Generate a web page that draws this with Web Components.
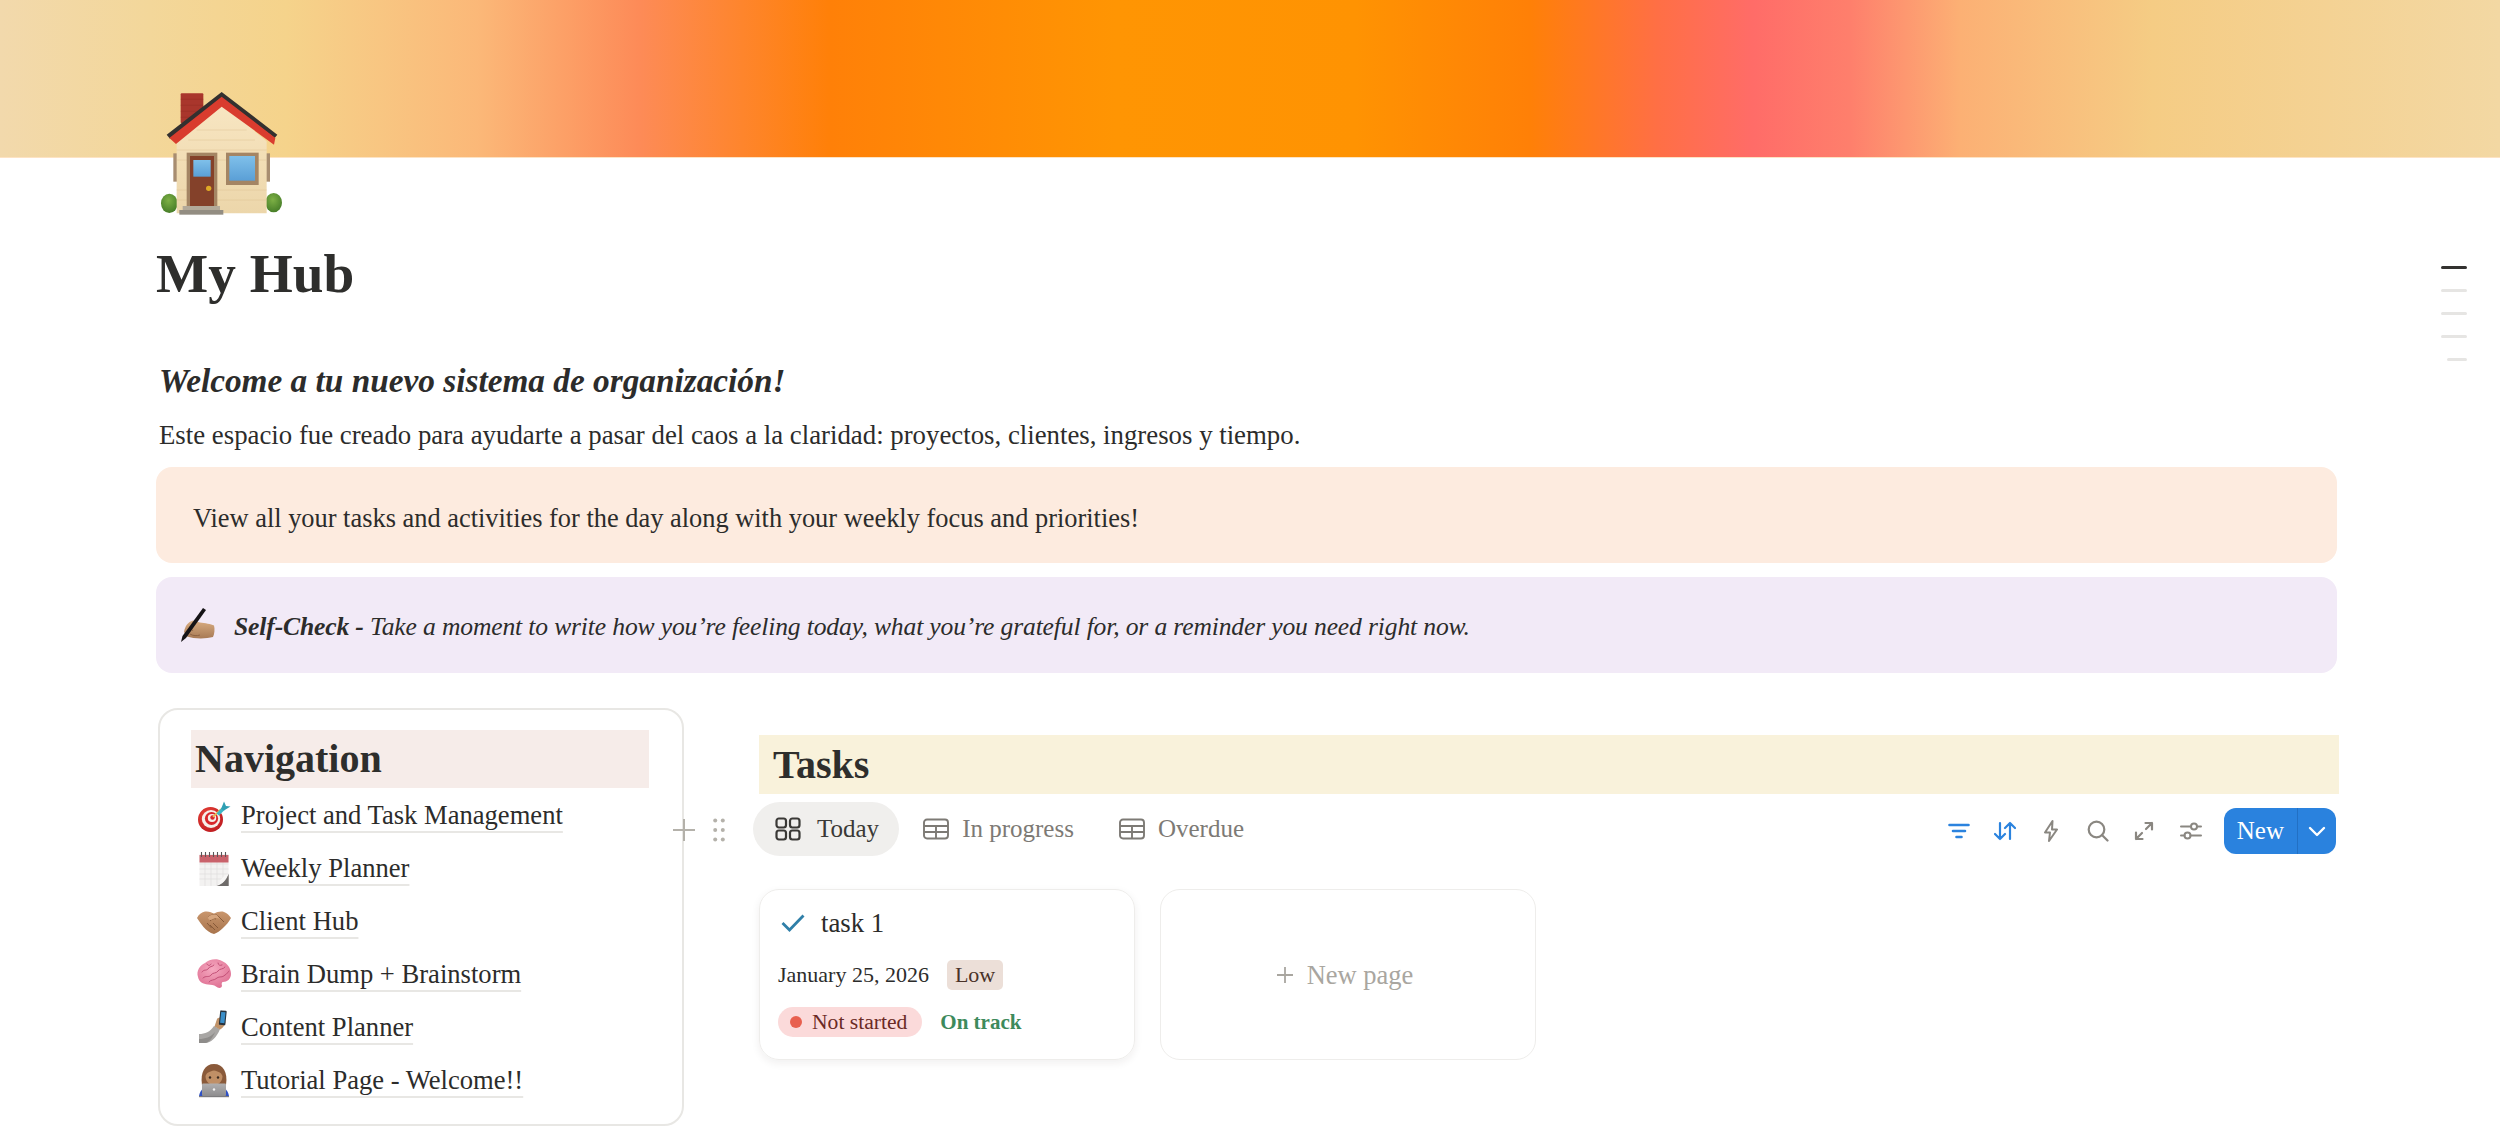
<!DOCTYPE html>
<html lang="en">
<head>
<meta charset="utf-8">
<title>My Hub</title>
<style>
  html, body { margin: 0; background: #fff; }
  body { font-family: "Liberation Serif", serif; color: #2c2c2b; }
</style>
</head>
<body>
<hub-page>
  <hub-cover></hub-cover>
  <hub-title>My Hub</hub-title>
  <hub-intro></hub-intro>
  <hub-callout tone="peach">View all your tasks and activities for the day along with your weekly focus and priorities!</hub-callout>
  <hub-callout tone="lilac" icon="writing"><b>Self-Check -</b> Take a moment to write how you’re feeling today, what you’re grateful for, or a reminder you need right now.</hub-callout>
  <hub-columns>
    <nav-card slot="left">
      <nav-link icon="target">Project and Task Management</nav-link>
      <nav-link icon="calendar">Weekly Planner</nav-link>
      <nav-link icon="handshake">Client Hub</nav-link>
      <nav-link icon="brain">Brain Dump + Brainstorm</nav-link>
      <nav-link icon="selfie">Content Planner</nav-link>
      <nav-link icon="laptop">Tutorial Page - Welcome!!</nav-link>
    </nav-card>
    <tasks-view slot="right">
      <task-card slot="cards"></task-card>
      <new-card slot="cards"></new-card>
    </tasks-view>
  </hub-columns>
  <outline-rail></outline-rail>
</hub-page>

<script>
// emoji pictures, all drawn in a 36x36 box
const EMOJI = {
  target: `
    <defs><radialGradient id="t1" cx=".4" cy=".35" r=".8"><stop offset="0" stop-color="#f04a3c"/><stop offset="1" stop-color="#b5131b"/></radialGradient></defs>
    <circle cx="14.5" cy="21.5" r="12.5" fill="url(#t1)"/>
    <ellipse cx="15" cy="21" rx="9.2" ry="9" fill="#f6efe9"/>
    <ellipse cx="15.5" cy="20.5" rx="6.6" ry="6.4" fill="#d8262a"/>
    <ellipse cx="16" cy="20" rx="4.2" ry="4" fill="#f6efe9"/>
    <circle cx="16.5" cy="19.5" r="2.2" fill="#d8262a"/>
    <path d="M17 19 L25 11" stroke="#e8c24a" stroke-width="1.6"/>
    <path d="M20.5 15.5 L26 9.5 L28.5 12 L23 17.5 Z" fill="#3eb6c6"/>
    <path d="M25 11 L28 3.5 L30 8 L34.5 8.5 L28 12.5 Z" fill="#2f9fb3"/>`,
  calendar: `
    <rect x="3.5" y="3" width="29" height="32" fill="#f3f2f1"/>
    <path d="M3.5 13 H32.5 M3.5 18 H32.5 M3.5 23 H32.5 M3.5 28 H32.5 M9 10 V35 M15 10 V35 M21 10 V35 M27 10 V35" stroke="#dfdedd" stroke-width=".7"/>
    <rect x="3.5" y="4" width="29" height="7.5" fill="#c9626b"/>
    <path d="M5.5 1 V6 M9.5 1 V6 M13.5 1 V6 M17.5 1 V6 M21.5 1 V6 M25.5 1 V6 M29.5 1 V6" stroke="#5a5557" stroke-width="1.1"/>
    <path d="M32.5 23 C29 28 25 29 21 35 H32.5 Z" fill="#8b8886"/>
    <path d="M32.5 23 C27 25 24 29 21 35 C26 33 30 30 32.5 23 Z" fill="#f7f6f5"/>
    <path d="M32.5 23 C31 29 27 33 21 35 L32.5 35 Z" fill="#6e6b69"/>`,
  handshake: `
    <defs><linearGradient id="h1" x1="0" y1="0" x2="0" y2="1"><stop offset="0" stop-color="#c9966d"/><stop offset="1" stop-color="#a8744c"/></linearGradient></defs>
    <path d="M1 14 C3 10 6 8 9 7.5 C13 7 16 8.5 18 9.5 C21 8 25 7 28 8 C31 9 33 11 35 14 C33 18 30 21 27 24 C24 27 21 29 18 30 C14 29 10 26 7.5 23 C5 20 3 17 1 14 Z" fill="url(#h1)"/>
    <path d="M12 13 C15 11 18 10 21 11 L28 18 M14 17 C16 15 18 14 20 15 M17 19 L22 24 M14 21 L19 26 M11 19 L15.5 24" stroke="#875a39" stroke-width="1" fill="none"/>
    <path d="M12 13 C12 16 14 17 17 15 C20 13.5 22 14 24 15 L21 11 C17 10 14 11 12 13 Z" fill="#d6a67e"/>`,
  brain: `
    <defs><radialGradient id="b1" cx=".45" cy=".35" r=".75"><stop offset="0" stop-color="#f6a9c0"/><stop offset="1" stop-color="#dc6a8e"/></radialGradient></defs>
    <path d="M2 20 C0 14 4 8 9 6 C13 2 21 1 26 4 C31 6 35 11 35 17 C35 22 31 25 27 25 C25.5 25 25.5 27 26 29 C25.5 31.5 22 31.5 20 29.5 C18 27.5 15 28 12 27.5 C7 27 3 25 2 20 Z" fill="url(#b1)"/>
    <path d="M6 15 C8 12 10 14 12 12 C13 9 17 10 18 8 M7 21 C10 18 13 21 15 18 C17 15 20 17 22 14 C24 11 27 13 29 10 M13 25 C15 22 18 24 21 21 C24 19 26 21 29 18 C31 17 32 15 33 14 M11 7 C12 9 14 9 15 7 M22 6 C22 8 24 9 26 8" stroke="#c24f76" stroke-width="1" fill="none" stroke-linecap="round"/>`,
  selfie: `
    <path d="M3 24 C9 24 14 22 18 16 L24 19 C21 27 15 33 9 33 H3 Z" fill="#a8a6a4"/>
    <path d="M3 29 C9 29 15 27 19 22 C17 27 13 33 9 33 H3 Z" fill="#8e8c8a"/>
    <path d="M18.5 16.5 L21 9 C22 7 27 7 28 9 L29.5 12 C29 15 26.5 18.5 24 19.5 Z" fill="#c09268"/>
    <rect x="23.5" y="0.5" width="6.5" height="14.5" rx="1" fill="#27333e" transform="rotate(6 26 8)"/>
    <rect x="24.6" y="2" width="4.3" height="11" fill="#3a8fc9" transform="rotate(6 26 8)"/>`,
  laptop: `
    <defs><linearGradient id="l1" x1="0" y1="0" x2="0" y2="1"><stop offset="0" stop-color="#b0afb0"/><stop offset="1" stop-color="#8e8d8f"/></linearGradient></defs>
    <path d="M6 22 C4 9 9 1 18 1 C27 1 32 9 30 22 Z" fill="#8a5a3a"/>
    <path d="M9.5 13 C11 9 14 8.5 18 7.5 C22 8.5 25 9 26.5 13 C26.5 19 22 22 18 22 C14 22 9.5 19 9.5 13 Z" fill="#c08f66"/>
    <circle cx="14" cy="14.5" r="1.2" fill="#3b2a20"/><circle cx="22" cy="14.5" r="1.2" fill="#3b2a20"/>
    <path d="M3 33 C3.5 30 5 27 8 24.5 H28 C31 27 32.5 30 33 33 Z" fill="#2f51c4"/>
    <rect x="6" y="20.5" width="24" height="12.5" rx="1" fill="url(#l1)"/>
    <rect x="3" y="33" width="30" height="1.2" fill="#7c7b7d"/>
    <circle cx="18" cy="26.5" r="1.2" fill="#f3f3f3"/>`,
  writing: `
    <defs><linearGradient id="w1" x1="0" y1="0" x2="0" y2="1"><stop offset="0" stop-color="#d9ad82"/><stop offset="1" stop-color="#a87a55"/></linearGradient></defs>
    <path d="M4 25 C5 19 8 15 13 13.5 L20 15.5 C25 16 31 17 34 18.5 C35 22 34.5 27 33 30 C26 32 14 32 7 29.5 Z" fill="url(#w1)"/>
    <path d="M10 27 C13 29 17 29 20 28 M8 24 C10 22 12 22 13 24" stroke="#8a5f40" stroke-width=".9" fill="none"/>
    <path d="M23 1 L26 3 L6 31 L1 35 L2.5 29 Z" fill="#151316"/>`
};

// shorthand for a plain custom element: markup and styles in an open shadow root
function defineEl(name, html, onConnect) {
  customElements.define(name, class extends HTMLElement {
    constructor() {
      super();
      this.attachShadow({ mode: 'open' }).innerHTML = html;
    }
    connectedCallback() {
      if (onConnect) onConnect(this);
    }
  });
}

function emojiSvg(name, size) {
  return `<svg xmlns="http://www.w3.org/2000/svg" width="${size}" height="${size}" viewBox="0 0 36 36" aria-hidden="true">${EMOJI[name]}</svg>`;
}

defineEl('hub-page', `
  <style>
    :host { display: block; position: relative; height: 1127px; overflow: hidden; }
    .body { padding: 0 163px 0 156px; }
  </style>
  <slot name="top"></slot>
  <div class="body"><slot></slot></div>
`);

defineEl('hub-cover', `
  <style>
    :host { display: block; }
    .band {
      height: 157px;
      border-bottom: 1px solid #fde3c4;
      background: linear-gradient(90deg,
        #f2d9ac 0, #f3d79a 150px, #f5d38b 287px, #fbb878 478px, #fd8b58 638px, #ff8008 829px,
        #ff9503 1116px, #ff9302 1355px, #ff8007 1530px, #ff6f45 1658px, #ff6c68 1753px,
        #fe7f6c 1850px, #fcb074 1960px, #f5cc84 2152px, #f3d8a3 2500px);
    }
    svg { display: block; margin: -88px 0 0 140px; }
  </style>
  <div class="band"></div>
  <svg xmlns="http://www.w3.org/2000/svg" width="160" height="160" viewBox="0 0 480 480" aria-hidden="true">
    <defs>
      <linearGradient id="wall" x1="0" y1="0" x2="0" y2="1"><stop offset="0" stop-color="#f8e6c2"/><stop offset="1" stop-color="#ecd6aa"/></linearGradient>
      <radialGradient id="bush" cx=".45" cy=".35" r=".7"><stop offset="0" stop-color="#7db045"/><stop offset="1" stop-color="#437a26"/></radialGradient>
      <linearGradient id="glass" x1="0" y1="0" x2="0" y2="1"><stop offset="0" stop-color="#7fc0ea"/><stop offset="1" stop-color="#5a9fd6"/></linearGradient>
    </defs>
    <rect x="122" y="70" width="68" height="90" rx="3" fill="#a9362c"/>
    <path d="M122 88 H190 M122 106 H190 M122 124 H190 M122 142 H190" stroke="#8e2a22" stroke-width="2" opacity=".5"/>
    <rect x="100" y="250" width="12" height="85" fill="#a88d70"/>
    <rect x="378" y="250" width="12" height="85" fill="#a88d70"/>
    <ellipse cx="88" cy="400" rx="25" ry="29" fill="url(#bush)"/>
    <ellipse cx="401" cy="398" rx="25" ry="29" fill="url(#bush)"/>
    <path d="M110 214 L245 100 L380 214 V430 H110 Z" fill="url(#wall)"/>
    <path d="M110 240 H380 M110 270 H380 M110 360 H380 M110 390 H380 M170 180 H320 M145 210 H345" stroke="#dcc08f" stroke-width="2" opacity=".6"/>
    <path d="M80 194 L245 66 L412 194 L404 204 L245 84 L90 206 Z" fill="#33302f"/>
    <path d="M88 204 L245 80 L406 204 L402 224 L245 110 L108 222 Z" fill="#d93c2e"/>
    <rect x="140" y="248" width="92" height="165" fill="#a48564"/>
    <rect x="150" y="258" width="72" height="150" fill="#84412a"/>
    <rect x="160" y="270" width="52" height="50" fill="url(#glass)"/>
    <circle cx="206" cy="355" r="8" fill="#e0aa26"/>
    <rect x="258" y="248" width="98" height="97" fill="#a48564"/>
    <rect x="268" y="258" width="77" height="74" fill="url(#glass)"/>
    <rect x="128" y="408" width="112" height="14" fill="#b3aa9a"/>
    <rect x="118" y="420" width="132" height="14" fill="#938d82"/>
  </svg>
`, el => { el.slot = 'top'; });

defineEl('hub-title', `
  <style>
    :host { display: block; margin: 9px 0 0 0; font: 700 55.3px/70px "Liberation Serif", serif; color: #2e2e2c; }
  </style>
  <slot></slot>
`);

defineEl('hub-intro', `
  <style>
    :host { display: block; margin: 50px 0 0 3px; font-family: "Liberation Serif", serif; }
    .lead { font: italic 700 33.3px/44px "Liberation Serif", serif; color: #2c2c2b; }
    .sub { font-size: 26.8px; line-height: 40px; margin-top: 12px; color: #2c2c2b; }
  </style>
  <div class="lead">Welcome a tu nuevo sistema de organización!</div>
  <div class="sub">Este espacio fue creado para ayudarte a pasar del caos a la claridad: proyectos, clientes, ingresos y tiempo.</div>
`);

customElements.define('hub-callout', class extends HTMLElement {
  constructor() {
    super();
    this.attachShadow({ mode: 'open' });
  }
  connectedCallback() {
    const lilac = this.getAttribute('tone') === 'lilac';
    const icon = this.getAttribute('icon');
    this.shadowRoot.innerHTML = `
      <style>
        :host { display: block; }
        .box {
          display: flex; align-items: center; box-sizing: border-box; height: 96px;
          margin-top: ${lilac ? 14 : 12}px; border-radius: 16px;
          padding: ${lilac ? 3 : 5}px 0 0 ${lilac ? 24 : 37}px; gap: 18px;
          background: ${lilac ? '#f2eaf7' : '#fdebdf'};
          font: ${lilac ? 'italic 25.6px/40px' : 'normal 26.4px/40px'} "Liberation Serif", serif;
          letter-spacing: ${lilac ? '-.15px' : '0'}; color: #2c2c2b;
        }
        svg { flex: none; display: block; margin-top: -4px; }
      </style>
      <div class="box">${icon ? emojiSvg(icon, 36) : ''}<div><slot></slot></div></div>`;
  }
});

defineEl('hub-columns', `
  <style>
    :host { display: grid; grid-template-columns: 526px 1580px; column-gap: 75px; margin: 35px 0 0 2px; align-items: start; }
    .side { position: relative; }
  </style>
  <div class="side"><slot name="left"></slot></div>
  <div class="side"><slot name="right"></slot></div>
`);

defineEl('nav-card', `
  <style>
    :host { display: block; position: relative; box-sizing: border-box; height: 418px; border: 2px solid #e8e7e4; border-radius: 20px; padding: 20px 33px 0 31px; }
    h2 { margin: 0; height: 58px; background: #f6ece9; padding-left: 4px; font: 700 40px/58px "Liberation Serif", serif; color: #2e2e2c; }
  </style>
  <h2>Navigation</h2>
  <slot></slot>
`);

customElements.define('nav-link', class extends HTMLElement {
  constructor() {
    super();
    this.attachShadow({ mode: 'open' });
  }
  connectedCallback() {
    this.shadowRoot.innerHTML = `
      <style>
        :host { display: flex; align-items: center; height: 53px; padding-left: 5px; gap: 9px; font: 26.6px/34px "Liberation Serif", serif; color: #2c2c2b; }
        svg { flex: none; display: block; margin-top: 3px; }
        span { text-decoration: underline; text-decoration-color: #e8e7e4; text-decoration-thickness: 2px; text-underline-offset: 7px; text-decoration-skip-ink: none; }
      </style>
      ${emojiSvg(this.getAttribute('icon'), 36)}<span><slot></slot></span>`;
  }
});

const TAB_GRID = `<svg width="26" height="24" viewBox="0 0 26 24" fill="none" stroke="currentColor" stroke-width="2.2"><rect x="1.5" y="1.5" width="9.5" height="9" rx="2.4"/><rect x="15" y="1.5" width="9.5" height="9" rx="2.4"/><rect x="1.5" y="13.5" width="9.5" height="9" rx="2.4"/><rect x="15" y="13.5" width="9.5" height="9" rx="2.4"/></svg>`;
const TAB_TABLE = `<svg width="26" height="22" viewBox="0 0 26 22" fill="none" stroke="currentColor" stroke-width="1.9"><rect x="1" y="1.5" width="24" height="19" rx="3"/><path d="M1 8 H25 M1 14 H25 M13 8 V20.5"/></svg>`;

defineEl('tasks-view', `
  <style>
    :host { display: block; position: relative; padding-top: 27px; font-family: "Liberation Serif", serif; }
    h2 { margin: 0; height: 59px; background: #f9f2db; padding-left: 14px; font: 700 40px/59px "Liberation Serif", serif; color: #2e2e2c; }
    .bar { display: flex; align-items: center; height: 54px; margin: 8px 0 0 -6px; font-size: 25px; }
    .tab { display: flex; align-items: center; gap: 16px; height: 54px; padding: 0 20px 0 22px; border-radius: 27px; color: #7d7a75; }
    .tab.on { background: #f0efed; color: #3a3936; }
    .tab + .tab { padding-left: 24px; padding-right: 20px; gap: 13px; }
    .tab + .tab + .tab { padding-left: 25px; }
    .tab svg { display: block; flex: none; }
    .tools { margin: 4px 3px 0 auto; display: flex; align-items: center; }
    .tools svg { display: block; flex: none; }
    .new { display: flex; height: 46px; margin-left: 22px; border-radius: 12px; background: #2a82de; color: #fff; font-size: 25px; }
    .new b { font-weight: 400; display: flex; align-items: center; padding: 0 13px; border-right: 1px solid #2270c4; }
    .new i { display: flex; align-items: center; justify-content: center; width: 38px; }
    .cards { display: flex; gap: 25px; margin-top: 33px; }
    .hover { position: absolute; left: -86px; top: 110px; display: flex; gap: 18px; align-items: center; }
    .hover svg { display: block; }
  </style>
  <h2>Tasks</h2>
  <div class="hover">
    <svg width="22" height="24" viewBox="0 0 22 24"><path d="M0 12 H22 M11 1 V23" stroke="#b4b1aa" stroke-width="2"/></svg>
    <svg width="12" height="24" viewBox="0 0 12 24" fill="#b4b1aa"><circle cx="2.2" cy="2.5" r="2"/><circle cx="9.8" cy="2.5" r="2"/><circle cx="2.2" cy="12" r="2"/><circle cx="9.8" cy="12" r="2"/><circle cx="2.2" cy="21.5" r="2"/><circle cx="9.8" cy="21.5" r="2"/></svg>
  </div>
  <div class="bar">
    <div class="tab on">${TAB_GRID}<span>Today</span></div>
    <div class="tab">${TAB_TABLE}<span>In progress</span></div>
    <div class="tab">${TAB_TABLE}<span>Overdue</span></div>
    <div class="tools">
      <svg width="22" height="16" viewBox="0 0 22 16" stroke="#2b83de" stroke-width="2.6" stroke-linecap="round" fill="none"><path d="M1.5 2 H20.5 M5 8 H17 M8.5 14 H13.5"/></svg>
      <svg style="margin-left:24px" width="22" height="20" viewBox="0 0 22 20" stroke="#2b83de" stroke-width="2.2" stroke-linecap="round" stroke-linejoin="round" fill="none"><path d="M6 2 V18 M1 13 L6 18 L11 13 M16 18 V2 M11 7 L16 2 L21 7"/></svg>
      <svg style="margin-left:28px" width="14" height="22" viewBox="0 0 14 22" stroke="#8a8781" stroke-width="2" stroke-linejoin="round" fill="none"><path d="M8.5 1 L1 12.5 H6 L5 21 L13 9.5 H8 Z"/></svg>
      <svg style="margin-left:29px" width="22" height="22" viewBox="0 0 22 22" stroke="#8a8781" stroke-width="2.2" stroke-linecap="round" fill="none"><circle cx="9.5" cy="9.5" r="7.8"/><path d="M15 15 L20.5 20.5"/></svg>
      <svg style="margin-left:25px" width="20" height="20" viewBox="0 0 20 20" stroke="#8a8781" stroke-width="2.2" stroke-linecap="round" stroke-linejoin="round" fill="none"><path d="M2 18 L8 12 M2 11.5 V18 H8.5 M18 2 L12 8 M11.5 2 H18 V8.5"/></svg>
      <svg style="margin-left:26px" width="22" height="18" viewBox="0 0 22 18" stroke="#8a8781" stroke-width="2" stroke-linecap="round" fill="none"><path d="M1 4.5 H11 M17 4.5 H21 M1 13.5 H4.5 M10.5 13.5 H21"/><circle cx="14" cy="4.5" r="3"/><circle cx="7.5" cy="13.5" r="3"/></svg>
      <div class="new"><b>New</b><i><svg width="18" height="11" viewBox="0 0 18 11" fill="none" stroke="#fff" stroke-width="2.4" stroke-linecap="round" stroke-linejoin="round"><path d="M2 2 L9 9 L16 2"/></svg></i></div>
    </div>
  </div>
  <div class="cards"><slot name="cards"></slot></div>
`);

defineEl('task-card', `
  <style>
    :host { display: block; box-sizing: border-box; width: 376px; height: 171px; border: 1.5px solid #eeedeb; border-radius: 20px; box-shadow: 0 3px 8px rgba(40,35,30,.07); padding: 0 18px; font-family: "Liberation Serif", serif; color: #2c2c2b; }
    .name { display: flex; align-items: center; gap: 16px; height: 50px; margin: 8px 0 0 3px; font-size: 26.8px; line-height: 34px; }
    .name svg { display: block; flex: none; }
    .line { display: flex; align-items: center; }
    .date { font-size: 22px; }
    .low { margin-left: 18px; height: 30px; padding: 0 8px; border-radius: 5px; background: #ecdfd8; color: #4a3228; font-size: 22px; line-height: 30px; }
    .state { display: flex; align-items: center; gap: 10px; height: 30px; box-sizing: border-box; padding: 0 15px 0 12px; border-radius: 15px; background: #fbdada; color: #6b2a25; font-size: 21.6px; }
    .state i { width: 12px; height: 12px; border-radius: 50%; background: #e8604f; }
    .track { margin-left: 18px; color: #3d8a5c; font-size: 21px; font-weight: 700; }
    .line.one { margin-top: 12px; }
    .line.two { margin-top: 17px; }
  </style>
  <div class="name"><svg width="24" height="18" viewBox="0 0 24 18" fill="none" stroke="#2f7fa8" stroke-width="2.8"><path d="M1.5 9 L8.5 16 L22.5 1.5"/></svg><span>task 1</span></div>
  <div class="line one"><span class="date">January 25, 2026</span><span class="low">Low</span></div>
  <div class="line two"><span class="state"><i></i>Not started</span><span class="track">On track</span></div>
`);

defineEl('new-card', `
  <style>
    :host { display: flex; align-items: center; justify-content: center; gap: 14px; box-sizing: border-box; width: 376px; height: 171px; padding-right: 6px; border: 1.5px solid #eeedeb; border-radius: 20px; color: #a9a6a0; font: 26.5px/34px "Liberation Serif", serif; }
    svg { display: block; }
  </style>
  <svg width="16" height="16" viewBox="0 0 16 16"><path d="M0 8 H16 M8 0 V16" stroke="#a9a6a0" stroke-width="1.8"/></svg><span>New page</span>
`);

defineEl('outline-rail', `
  <style>
    :host { position: absolute; left: 2441px; top: 266px; width: 26px; display: flex; flex-direction: column; align-items: flex-end; gap: 20px; }
    i { display: block; width: 26px; height: 3px; border-radius: 2px; background: #e6e5e3; }
    i:first-of-type { background: #333230; }
    i:last-child { width: 20px; }
  </style>
  <i></i><i></i><i></i><i></i><i></i>
`);
</script>
</body>
</html>
